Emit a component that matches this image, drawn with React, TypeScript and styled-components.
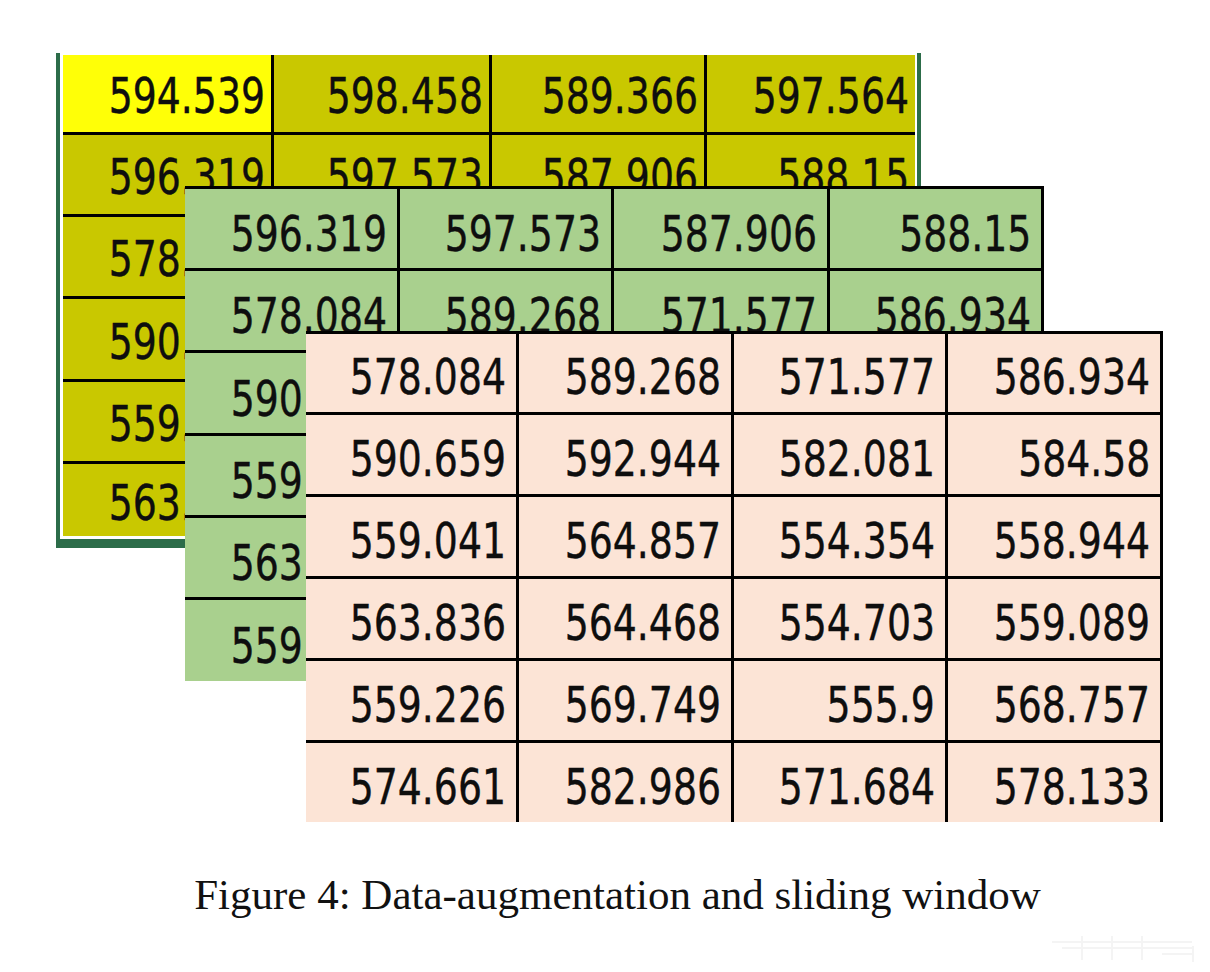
import React from "react";
import styled, { createGlobalStyle } from "styled-components";

const GlobalStyle = createGlobalStyle`
  html, body { margin: 0; padding: 0; background: #ffffff; }
  #root { width: 1210px; min-height: 972px; }
`;

const rowsData: string[][] = [
  ["594.539", "598.458", "589.366", "597.564"],
  ["596.319", "597.573", "587.906", "588.15"],
  ["578.084", "589.268", "571.577", "586.934"],
  ["590.659", "592.944", "582.081", "584.58"],
  ["559.041", "564.857", "554.354", "558.944"],
  ["563.836", "564.468", "554.703", "559.089"],
  ["559.226", "569.749", "555.9", "568.757"],
  ["574.661", "582.986", "571.684", "578.133"],
];

const Page = styled.div`
  width: 1210px;
  height: 972px;
  display: flex;
  flex-direction: column;
  background: #ffffff;
  position: relative;
  overflow: hidden;
`;

const Figure = styled.div`
  position: relative;
  height: 871px;
  flex: none;
`;

const Selection = styled.div<{ $left: number; $top: number }>`
  position: absolute;
  left: ${(p) => p.$left}px;
  top: ${(p) => p.$top}px;
  border-left: 4px solid #2c6c49;
  border-right: 4px solid #2c6c49;
  border-bottom: 9px solid #2c6c49;
  padding: 2px 2px 3px 3px;
  background: #ffffff;
`;

const Sheet = styled.div<{
  $left?: number;
  $top?: number;
  $cols: string;
  $rows: string;
  $framed: boolean;
  $floating: boolean;
}>`
  ${(p) =>
    p.$floating
      ? `position: absolute; left: ${p.$left}px; top: ${p.$top}px;`
      : ""}
  display: grid;
  grid-template-columns: ${(p) => p.$cols};
  grid-template-rows: ${(p) => p.$rows};
  gap: 3px;
  background: #000000;
  ${(p) =>
    p.$framed ? "border-top: 3px solid #000; border-right: 3px solid #000;" : ""}
`;

const Cell = styled.div<{ $bg: string; $padTop: number; $padRight: number }>`
  background: ${(p) => p.$bg};
  display: flex;
  align-items: center;
  justify-content: flex-end;
  padding-top: ${(p) => p.$padTop}px;
  padding-right: ${(p) => p.$padRight}px;
  overflow: visible;
  min-width: 0;
`;

const Num = styled.span`
  display: inline-block;
  font-family: "DejaVu Sans Condensed", "DejaVu Sans", sans-serif;
  font-stretch: condensed;
  font-size: 50px;
  line-height: 58px;
  color: #0e0e0e;
  -webkit-text-stroke: 0.4px #0e0e0e;
  white-space: nowrap;
  transform: scaleX(0.84);
  transform-origin: right center;
`;

const Caption = styled.div`
  font-family: "Liberation Serif", "Times New Roman", serif;
  font-size: 43px;
  line-height: 48px;
  color: #111111;
  text-align: center;
  padding-left: 25px;
`;

const Smudge = styled.svg`
  position: absolute;
  right: 8px;
  bottom: 8px;
`;

type SheetProps = {
  data: string[][];
  base: string;
  highlight?: string;
  padTop: number;
  padRight: number;
};

function cells({ data, base, highlight, padTop, padRight }: SheetProps) {
  return data.flatMap((row, r) =>
    row.map((v, c) => (
      <Cell
        key={`${r}-${c}`}
        $bg={highlight && r === 0 && c === 0 ? highlight : base}
        $padTop={padTop}
        $padRight={padRight}
      >
        <Num>{v}</Num>
      </Cell>
    ))
  );
}

export default function App() {
  return (
    <>
      <GlobalStyle />
      <Page>
        <Figure>
          <Selection $left={56} $top={53}>
            <Sheet
              $cols="208px 215px 212px 208px"
              $rows="77px 79px 79px 80px 79px 72px"
              $framed={false}
              $floating={false}
            >
              {cells({
                data: rowsData.slice(0, 6),
                base: "#c9c800",
                highlight: "#ffff07",
                padTop: 5,
                padRight: 6,
              })}
            </Sheet>
          </Selection>
          <Sheet
            $left={185}
            $top={186}
            $cols="212px 211px 213px 211px"
            $rows="79px 79px 80px 79px 79px 81px"
            $framed
            $floating
          >
            {cells({
              data: rowsData.slice(1, 7),
              base: "#a9d08e",
              padTop: 11,
              padRight: 10,
            })}
          </Sheet>
          <Sheet
            $left={306}
            $top={331}
            $cols="210px 212px 211px 212px"
            $rows="78px 79px 79px 79px 79px 79px"
            $framed
            $floating
          >
            {cells({
              data: rowsData.slice(2, 8),
              base: "#fce4d6",
              padTop: 8,
              padRight: 10,
            })}
          </Sheet>
        </Figure>
        <Caption>Figure 4: Data-augmentation and sliding window</Caption>
        <Smudge width="150" height="44" viewBox="0 0 150 44">
          <g stroke="#f4f4f4" strokeWidth="2" fill="none">
            <line x1="0" y1="22" x2="140" y2="22" />
            <line x1="10" y1="28" x2="142" y2="28" />
            <line x1="110" y1="34" x2="142" y2="34" />
            <line x1="30" y1="16" x2="30" y2="40" />
            <line x1="60" y1="16" x2="60" y2="40" />
            <line x1="90" y1="16" x2="90" y2="40" />
            <line x1="141" y1="26" x2="141" y2="42" />
          </g>
        </Smudge>
      </Page>
    </>
  );
}
